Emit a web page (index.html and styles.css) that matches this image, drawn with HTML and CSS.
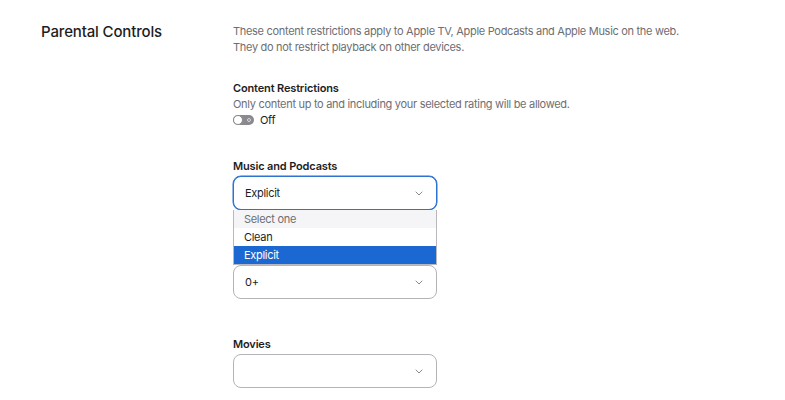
FILE: index.html
```html
<!DOCTYPE html>
<html lang="en">
<head>
<meta charset="utf-8">
<title>Parental Controls</title>
<link rel="stylesheet" href="styles.css">
</head>
<body>
<main class="settings">
  <h2 class="settings-title">Parental Controls</h2>
  <div class="settings-body">
    <p class="intro">These content restrictions apply to Apple TV, Apple Podcasts and Apple Music on the web.<br>They do not restrict playback on other devices.</p>

    <section class="restrictions">
      <h3 class="label">Content Restrictions</h3>
      <p class="hint">Only content up to and including your selected rating will be allowed.</p>
      <div class="toggle-row">
        <span class="toggle"><span class="knob"></span><span class="off-mark"></span></span>
        <span class="toggle-text">Off</span>
      </div>
    </section>

    <div class="field field-first">
      <div class="label">Music and Podcasts</div>
      <div class="select-wrap">
        <div class="select is-focused">
          <span class="select-value">Explicit</span>
          <svg class="chevron" width="8" height="5" viewBox="0 0 8 5"><path d="M1 1l3 3 3-3" fill="none" stroke="#8a8a8e" stroke-width="1" stroke-linecap="round" stroke-linejoin="round"/></svg>
        </div>
        <ul class="menu">
          <li class="menu-item is-placeholder">Select one</li>
          <li class="menu-item">Clean</li>
          <li class="menu-item is-selected">Explicit</li>
        </ul>
      </div>
    </div>

    <div class="field">
      <!-- label sits under the open option list -->
      <div class="label label-covered" aria-label="TV Shows"></div>
      <div class="select">
        <span class="select-value">0+</span>
        <svg class="chevron" width="8" height="5" viewBox="0 0 8 5"><path d="M1 1l3 3 3-3" fill="none" stroke="#8a8a8e" stroke-width="1" stroke-linecap="round" stroke-linejoin="round"/></svg>
      </div>
    </div>

    <div class="field">
      <div class="label">Movies</div>
      <div class="select">
        <span class="select-value"></span>
        <svg class="chevron" width="8" height="5" viewBox="0 0 8 5"><path d="M1 1l3 3 3-3" fill="none" stroke="#8a8a8e" stroke-width="1" stroke-linecap="round" stroke-linejoin="round"/></svg>
      </div>
    </div>
  </div>
</main>
</body>
</html>
```

FILE: styles.css
```css
html, body {
  margin: 0;
  padding: 0;
  background: #ffffff;
}

body {
  font-family: Inter, "Noto Sans", "Liberation Sans", sans-serif;
  color: #1d1d1f;
  font-size: 11px;
  line-height: 16px;
  letter-spacing: -0.3px;
}

.settings {
  display: grid;
  grid-template-columns: 192px 1fr;
  padding: 23px 0 0 41px;
}

.settings-title {
  margin: 0;
  margin-top: -1px;
  font-size: 15px;
  font-weight: 500;
  line-height: 20px;
  letter-spacing: -0.15px;
}

.settings-body {
  display: flex;
  flex-direction: column;
  width: 440px;
}

.intro {
  margin: 0;
  color: #6e6e73;
  white-space: nowrap;
}

.restrictions {
  margin-top: 25px;
}

.label {
  margin: 0;
  font-size: 11px;
  font-weight: 600;
  line-height: 16px;
  letter-spacing: -0.15px;
  color: #1d1d1f;
}

.label-covered {
  height: 16px;
}

.hint {
  margin: 0;
  color: #6e6e73;
  white-space: nowrap;
}

.toggle-row {
  display: flex;
  align-items: center;
  gap: 6px;
  height: 16px;
}

.toggle {
  display: flex;
  align-items: center;
  justify-content: space-between;
  width: 21px;
  height: 10px;
  border-radius: 5px;
  background: #8a8a8e;
}

.knob {
  width: 10px;
  height: 10px;
  border-radius: 50%;
  background: #ffffff;
  border: 1px solid #8a8a8e;
  box-sizing: border-box;
}

.off-mark {
  width: 4px;
  height: 4px;
  margin-right: 3px;
  border-radius: 50%;
  border: 1px solid #d8d8dc;
  box-sizing: border-box;
}

.toggle-text {
  color: #1d1d1f;
}

.field {
  display: flex;
  flex-direction: column;
  gap: 2px;
  width: 204px;
  margin-top: 37px;
}

.field-first {
  margin-top: 30px;
}

.select-wrap {
  position: relative;
}

.select {
  display: flex;
  align-items: center;
  justify-content: space-between;
  height: 34px;
  box-sizing: border-box;
  padding: 0 13px 0 11px;
  border: 1px solid #b4b4b8;
  border-radius: 8px;
  background: #ffffff;
}

.select.is-focused {
  border-color: #2f73d0;
  box-shadow: 0 0 0 0.5px #2f73d0;
}

.select-value {
  color: #1d1d1f;
}

.chevron {
  display: block;
}

/* open option list of the focused select */
.menu {
  position: absolute;
  top: 100%;
  left: 0;
  right: 0;
  z-index: 2;
  margin: 0;
  padding: 0;
  list-style: none;
  background: #ffffff;
  border: 1px solid #b9b9bd;
  border-top: none;
}

.menu-item {
  height: 18px;
  line-height: 18px;
  padding: 0 10px;
  color: #1d1d1f;
}

.menu-item.is-placeholder {
  background: #f5f5f7;
  color: #6e6e73;
}

.menu-item.is-selected {
  background: #1c68d3;
  color: #ffffff;
}
```
